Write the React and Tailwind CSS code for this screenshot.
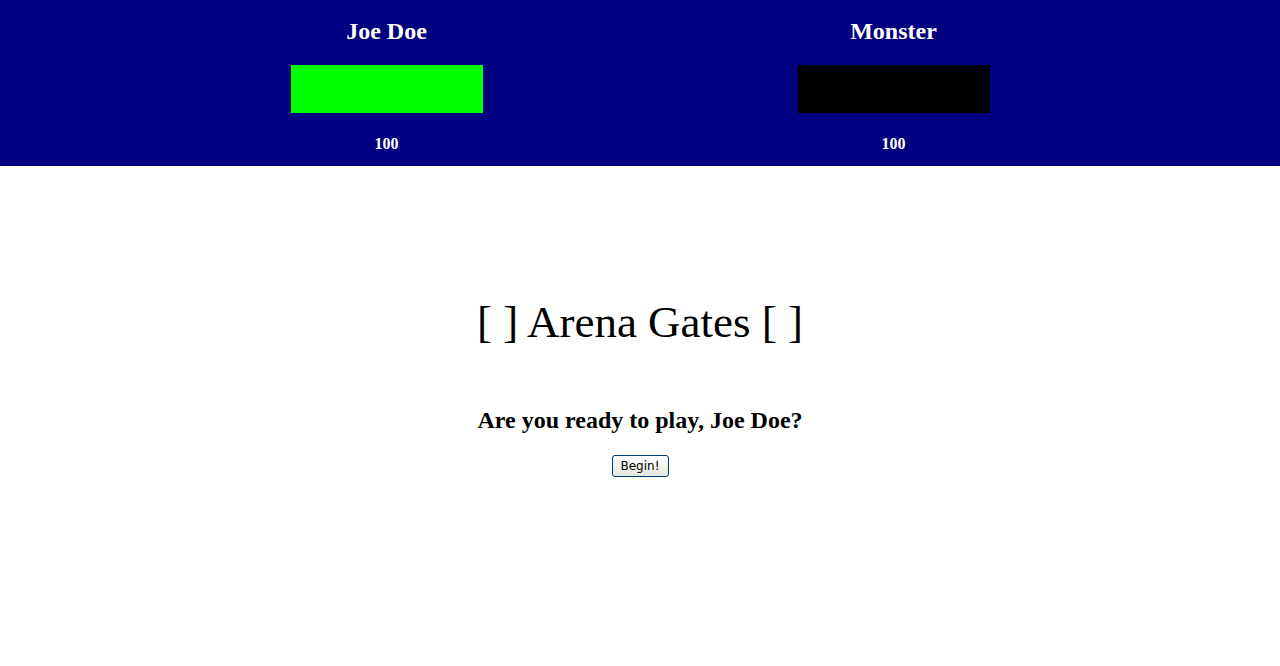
import React from "react";

function Fighter({ name, color }) {
  return (
    <div className="flex flex-col items-center">
      <div className="pt-[17px] text-[24px] leading-[28px] font-bold text-white">{name}</div>
      <div className={`mt-[20px] w-[192px] h-[48px] ${color}`}></div>
      <div className="mt-[22px] pb-[13px] text-[16px] leading-[18px] font-bold text-white">100</div>
    </div>
  );
}

export default function App() {
  return (
    <div className="min-h-[666px] bg-white" style={{ fontFamily: '"Liberation Serif", "Times New Roman", serif' }}>
      <div className="bg-[#000080]">
        <div className="mx-auto grid w-[1014px] grid-cols-2">
          <Fighter name="Joe Doe" color="bg-[#00ff00]" />
          <Fighter name="Monster" color="bg-black" />
        </div>
      </div>
      <div className="flex flex-col items-center">
        <h1 className="mt-[128px] text-[45px] leading-[56px] font-normal text-black">[ ] Arena Gates [ ]</h1>
        <h2 className="mt-[56px] text-[24px] leading-[28px] font-bold text-black">Are you ready to play, Joe Doe?</h2>
        <button
          className="mt-[21px] h-[22px] w-[57px] rounded-[3px] border border-[#003c74] bg-gradient-to-b from-white to-[#e6e6e0] text-[12px] leading-[20px] text-black"
          style={{ fontFamily: '"DejaVu Sans", "Liberation Sans", sans-serif' }}
        >
          Begin!
        </button>
      </div>
    </div>
  );
}
